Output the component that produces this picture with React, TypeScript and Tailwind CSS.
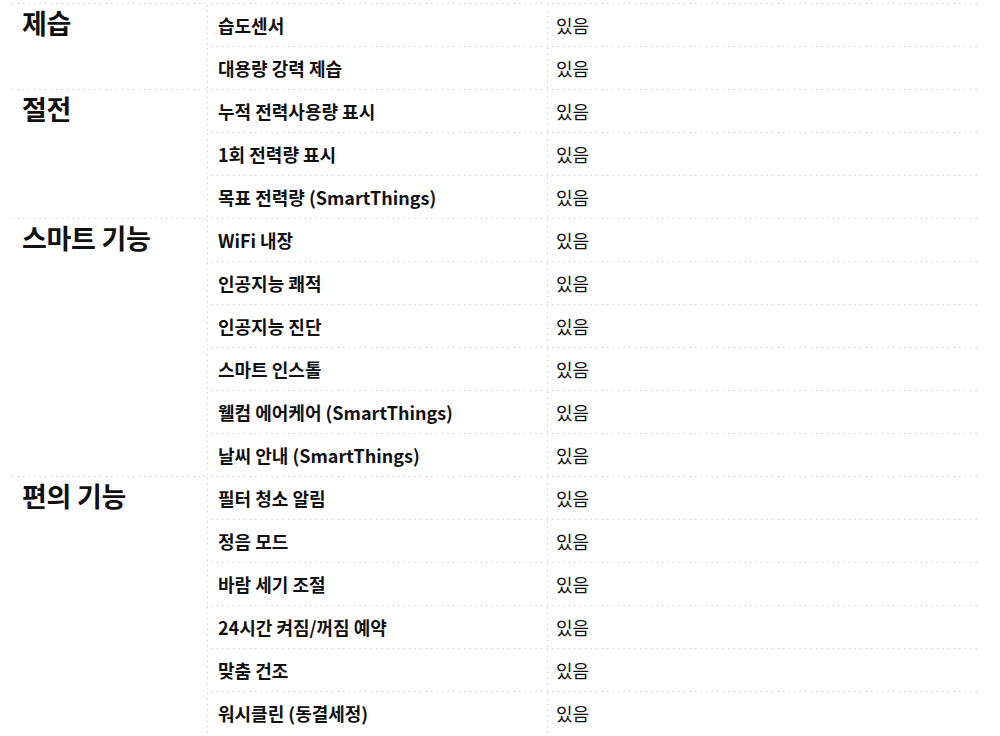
import React from 'react';
import clsx from 'clsx';

type Group = { title: string; rows: string[] };

const groups: Group[] = [
    { title: '제습', rows: ['습도센서', '대용량 강력 제습'] },
    { title: '절전', rows: ['누적 전력사용량 표시', '1회 전력량 표시', '목표 전력량 (SmartThings)'] },
    {
        title: '스마트 기능',
        rows: [
            'WiFi 내장',
            '인공지능 쾌적',
            '인공지능 진단',
            '스마트 인스톨',
            '웰컴 에어케어 (SmartThings)',
            '날씨 안내 (SmartThings)',
        ],
    },
    {
        title: '편의 기능',
        rows: ['필터 청소 알림', '정음 모드', '바람 세기 조절', '24시간 켜짐/꺼짐 예약', '맞춤 건조', '워시클린 (동결세정)'],
    },
];

// sparse dotted rules, drawn as repeating gradients
const topDots =
    'bg-[linear-gradient(to_right,#bdbdbd_1px,transparent_1px)] bg-[length:5.5px_1px] bg-repeat-x bg-top';
const leftDots =
    'bg-[linear-gradient(to_bottom,#bdbdbd_1px,transparent_1px)] bg-[length:1px_5.5px] bg-repeat-y bg-left';

export default function App() {
    return (
        <div
            className="min-h-screen bg-white pl-[10px] pr-[20px] pt-[3px] text-[#111]"
            style={{ fontFamily: '"Noto Sans CJK KR", "Noto Sans", sans-serif' }}
        >
            {groups.map((g) => (
                <div key={g.title} className="flex">
                    <div className={clsx('w-[197px] shrink-0', topDots)}>
                        <div className="flex h-[41px] items-center pl-[12px] text-[27px] font-bold tracking-[-0.3px]">
                            {g.title}
                        </div>
                    </div>
                    <div className="flex-1">
                        {g.rows.map((r) => (
                            <div key={r} className={clsx('flex h-[43px]', topDots)}>
                                <div
                                    className={clsx(
                                        'flex w-[340px] shrink-0 items-center pl-[11px] pt-px text-[18px] font-bold',
                                        leftDots
                                    )}
                                >
                                    {r}
                                </div>
                                <div className={clsx('flex flex-1 items-center pl-[9px] pt-px text-[18px]', leftDots)}>
                                    있음
                                </div>
                            </div>
                        ))}
                    </div>
                </div>
            ))}
        </div>
    );
}
